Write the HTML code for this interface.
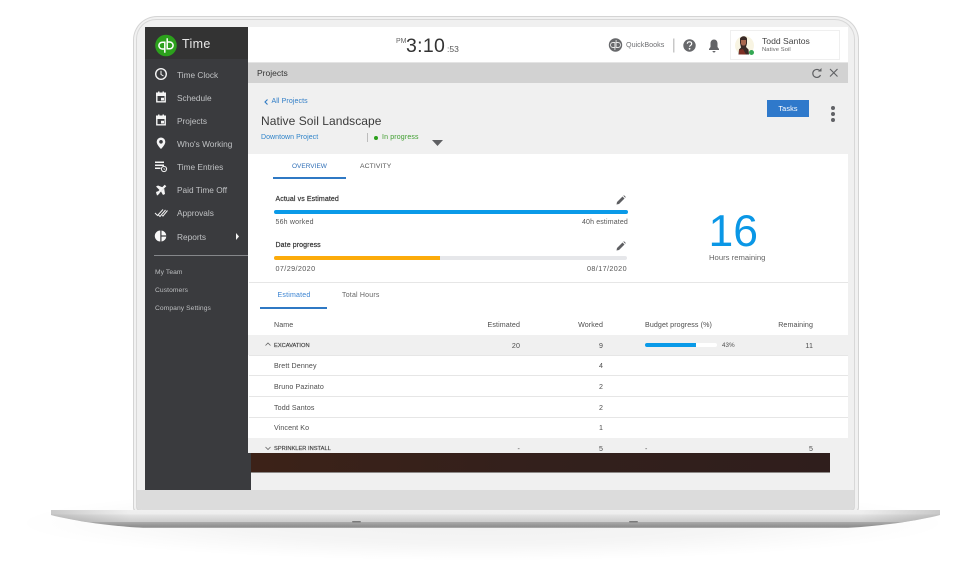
<!DOCTYPE html>
<html><head><meta charset="utf-8"><style>
html,body{margin:0;padding:0;background:#fff}
#p{position:relative;width:965px;height:561px;overflow:hidden;background:#fff;font-family:"Liberation Sans",sans-serif}
#p div{position:absolute;white-space:nowrap}
.nav{left:177px;font-size:8.300px;line-height:12px;color:#c0c2c4}
.sub{left:155px;font-size:6.700px;line-height:10px;color:#bcbec0;letter-spacing:.08px}
.c{font-size:7.100px;line-height:10px;color:#4d4d4d;letter-spacing:.1px}
.g{font-size:5.700px;color:#3d3d3d;letter-spacing:.02px;-webkit-text-stroke:.15px #3d3d3d}
.r{text-align:right}
.line{left:249px;width:599px;height:1px;background:#e6e6e6}
svg{position:absolute;overflow:visible}
</style></head><body><div id="p">

<!-- shadow -->
<div style="left:15px;top:485px;width:935px;height:76px;background:radial-gradient(ellipse 50% 50% at center,rgba(0,0,0,.055) 0,rgba(0,0,0,.04) 55%,rgba(0,0,0,.01) 85%,rgba(0,0,0,0) 100%)"></div>

<!-- lid -->
<div style="left:133px;top:16px;width:726px;height:496px;border-radius:24px 24px 4px 4px;background:#d4d4d4"></div>
<div style="left:134px;top:17px;width:724px;height:494px;border-radius:23px 23px 4px 4px;background:#f1f1f1"></div>
<div style="left:136px;top:19px;width:719px;height:492px;border-radius:20px 20px 4px 4px;background:#d8d8d8"></div>
<div style="left:137px;top:20px;width:717px;height:490px;border-radius:19px 19px 5px 5px;background:#f0f0f0"></div>
<div style="left:137px;top:490px;width:717px;height:20px;border-radius:0 0 5px 5px;background:#dcdcdc"></div>

<!-- base -->
<svg width="965" height="561" style="left:0;top:0">
<defs><linearGradient id="b" x1="0" y1="0" x2="0" y2="1"><stop offset="0" stop-color="#f2f2f2"/><stop offset=".2" stop-color="#f0f0f0"/><stop offset=".3" stop-color="#d6d6d6"/><stop offset=".85" stop-color="#969696"/><stop offset=".95" stop-color="#8e8e8e"/><stop offset="1" stop-color="#c4c4c4"/></linearGradient>
<linearGradient id="e" x1="0" y1="0" x2="1" y2="0"><stop offset="0" stop-color="#a8a8a8"/><stop offset=".09" stop-color="#ededed" stop-opacity=".9"/><stop offset=".91" stop-color="#ededed" stop-opacity=".9"/><stop offset="1" stop-color="#a8a8a8"/></linearGradient></defs>
<path d="M51 510H940V515C915 521 890 525 848 528H143C100 525 76 521 51 515Z" fill="url(#b)"/>
<path d="M51 510H940V515C930 518 915 520 905 522H86C76 520 61 518 51 515Z" fill="url(#e)" opacity=".55"/>
<rect x="352" y="521" width="9" height="1.500" rx="1" fill="#7a7a7a"/><rect x="629" y="521" width="9" height="1.500" rx="1" fill="#7a7a7a"/>
</svg>

<!-- screen -->
<div style="left:145px;top:27px;width:103px;height:463px;background:#3a3b3e"></div>
<div style="left:145px;top:27px;width:103px;height:32px;background:#333;border-radius:3px 0 0 0"></div>
<div style="left:248px;top:27px;width:600px;height:36px;background:#fff"></div>
<div style="left:248px;top:63px;width:600px;height:20px;background:#d2d2d2;box-shadow:0 -1px 0 #e4e4e4"></div>
<div style="left:248px;top:83px;width:600px;height:71px;background:#f0f0f0"></div>
<div style="left:248px;top:154px;width:600px;height:299px;background:#fff"></div>
<div style="left:248px;top:335px;width:600px;height:20px;background:#f0f0f0"></div>
<div style="left:248px;top:438px;width:600px;height:15px;background:#f0f0f0"></div>
<div style="left:251px;top:453px;width:579px;height:18.500px;background:linear-gradient(90deg,#3c2218,#33201c 50%,#2f1e1c);box-shadow:0 1px 0 #8c8886"></div>
<div style="left:248px;top:453px;width:3px;height:37px;background:#3a3b3e"></div>

<!-- logo -->
<svg width="24" height="24" style="left:154px;top:34px" viewBox="0 0 24 24" fill="none"><circle cx="12" cy="11.500" r="10.800" fill="#2ca01c"/><path d="M10.800 15H8.300A3.400 3.400 0 0 1 8.300 8.200H10.800V18.800M13.200 8H15.700A3.400 3.400 0 0 1 15.700 14.800H13.200V4.200" stroke="#fff" stroke-width="1.500"/></svg>
<div style="left:182px;top:36px;font-size:12.500px;line-height:16px;color:#e8e8e8;letter-spacing:.35px">Time</div>

<!-- nav icons -->
<svg width="100" height="190" style="left:150px;top:64px" viewBox="0 0 100 190" fill="none">
<circle cx="11" cy="10" r="5.300" stroke="#f4f4f4" stroke-width="1.400"/><path d="M11 6.800V10.500L13.500 12" stroke="#f4f4f4" stroke-width="1"/>
<path d="M6.800 30H15.200V37.800H6.800Z" stroke="#f4f4f4" stroke-width="1.400"/><path d="M6 28.500H16V32H6ZM8 27.500H9.500V29H8ZM12.500 27.500H14V29H12.500ZM11 33.800H14V36.500H11Z" fill="#f4f4f4"/>
<path d="M6.800 53H15.200V60.800H6.800Z" stroke="#f4f4f4" stroke-width="1.400"/><path d="M6 51.500H16V55H6ZM8 50.500H9.500V52H8ZM12.500 50.500H14V52H12.500ZM11 56.800H14V59.500H11Z" fill="#f4f4f4"/>
<path fill-rule="evenodd" d="M11 73.500A4.300 4.300 0 0 1 15.300 77.800C15.300 80.500 12.500 83.500 11 85C9.500 83.500 6.700 80.500 6.700 77.800A4.300 4.300 0 0 1 11 73.500ZM11 76A1.800 1.800 0 1 0 11 79.600A1.800 1.800 0 1 0 11 76Z" fill="#f4f4f4"/>
<path d="M5 97.500H14V99H5ZM5 100.500H14V102H5ZM5 103.500H10.500V105H5Z" fill="#f4f4f4"/><circle cx="14" cy="105" r="2.600" stroke="#f4f4f4"/><path d="M14 103.800V105.200H15.300" stroke="#f4f4f4" stroke-width=".6"/>
<path d="M7 130L15.500 121.500" stroke="#f4f4f4" stroke-width="2.200"/><path d="M6 122.500L8 121.500L13 123.500L10 126.500ZM14.200 124.500L15 130L13 131L11 127.500ZM6 128L7.800 127.300L9.800 129L8 131L7 131.500Z" fill="#f4f4f4"/>
<path d="M5 149L7.500 151.500L13 145.500M8.500 151L10 152.500L15.500 146M12 151.500L13 152L17.500 146.500" stroke="#f0f0f0" stroke-width="1"/>
<path fill-rule="evenodd" d="M10.300 166.500V177.500A5.500 5.500 0 0 1 10.300 166.500ZM11.500 166.500A5.500 5.500 0 0 1 16.300 171.400H11.500ZM11.500 172.600H16.300A5.500 5.500 0 0 1 11.500 177.500Z" fill="#f8f8f8"/>
<path d="M86 169L89 172.500L86 176Z" fill="#f4f4f4"/>
</svg>
<div class="nav" style="top:68.500px">Time Clock</div>
<div class="nav" style="top:91.500px">Schedule</div>
<div class="nav" style="top:114.500px">Projects</div>
<div class="nav" style="top:137.500px">Who's Working</div>
<div class="nav" style="top:160.500px">Time Entries</div>
<div class="nav" style="top:183.500px">Paid Time Off</div>
<div class="nav" style="top:206.500px">Approvals</div>
<div class="nav" style="top:230.500px">Reports</div>
<div style="left:154px;top:255px;width:94px;height:1px;background:#85878a"></div>
<div class="sub" style="top:268px">My Team</div>
<div class="sub" style="top:286px">Customers</div>
<div class="sub" style="top:304px">Company Settings</div>

<!-- clock -->
<div style="left:396px;top:38px;font-size:7px;line-height:8px;color:#666">PM</div>
<div style="left:406px;top:34px;font-size:19.500px;line-height:24px;color:#333;letter-spacing:.3px">3:10</div>
<div style="left:447px;top:44px;font-size:8.500px;line-height:10px;color:#555">:53</div>

<!-- top right -->
<svg width="240" height="30" style="left:605px;top:30px" viewBox="0 0 240 30" fill="none">
<circle cx="10.500" cy="15" r="6.700" fill="#68696c"/><path d="M9.900 17.500H8A2.500 2.500 0 0 1 8 12.500H9.900V20M11.100 12.500H13A2.500 2.500 0 0 1 13 17.500H11.100V10" stroke="#e8e8e8" stroke-width=".9"/>
<rect x="68" y="8.500" width="1.500" height="14" fill="#c8c8c8"/>
<circle cx="84.500" cy="15.500" r="6.200" fill="#67686b"/><path d="M82.300 13.800C82.300 12.500 83.300 11.800 84.500 11.800C85.800 11.800 86.700 12.500 86.700 13.700C86.700 15.300 84.600 15.300 84.600 16.800" stroke="#fff" stroke-width="1.200"/><circle cx="84.600" cy="18.800" r=".9" fill="#fff"/>
<path d="M109 9.500C111 9.500 112.500 11 112.500 13.500V17L114 19V20H104V19L105.500 17V13.500C105.500 11 107 9.500 109 9.500ZM107.500 21H110.500C110.500 22 109.800 22.500 109 22.500C108.200 22.500 107.500 22 107.500 21Z" fill="#636467"/>
</svg>
<div style="left:626px;top:40px;font-size:7.200px;line-height:10px;color:#6f7073">QuickBooks</div>

<div style="left:730px;top:30px;width:108px;height:28px;background:#fff;border:1px solid #efefef"></div>
<div style="left:734.500px;top:35.500px;width:19px;height:19px;border-radius:50%;background:#f8f4e2;overflow:hidden"></div>
<svg width="19" height="20" style="left:735px;top:35px" viewBox="0 0 19 20"><path d="M5 3.500C6.500 .5 11 .5 12 3.500L12 8.500L11 12L13.500 14.500L14 19.500H3.500L4 14.500L6 12.500L5 8Z" fill="#3a2a26"/><path d="M6 5H11V9L9.500 10.500H7.500L6 9Z" fill="#a8674e"/><path d="M4 15L8 14L11 19.500H4Z" fill="#7c2f24"/></svg>
<div style="left:748.500px;top:49.500px;width:5px;height:5px;border-radius:50%;background:#34a853"></div>
<div style="left:762px;top:36px;font-size:8.600px;line-height:11px;color:#444">Todd Santos</div>
<div style="left:762px;top:45.500px;font-size:5.800px;line-height:9px;color:#666;letter-spacing:.1px">Native Soil</div>

<!-- projects bar -->
<div style="left:257px;top:68px;font-size:8.500px;line-height:11px;color:#333">Projects</div>
<svg width="34" height="14" style="left:810px;top:66px" viewBox="0 0 34 14" fill="none"><path d="M10 5A4 4 0 1 0 10.500 9" stroke="#5f6063" stroke-width="1.200"/><path d="M8 5.500H11.500V2Z" fill="#5f6063"/><path d="M20 3L27.500 10.500M27.500 3L20 10.500" stroke="#5f6063" stroke-width="1.100"/></svg>

<!-- header -->
<svg width="6" height="8" style="left:264px;top:98px" viewBox="0 0 6 8" fill="none"><path d="M3.500 1.500L1 4L3.500 6.500" stroke="#2f7ac4" stroke-width="1.100"/></svg>
<div style="left:271.500px;top:97px;font-size:7px;line-height:10px;color:#2e7cc6;letter-spacing:.1px">All Projects</div>
<div style="left:261px;top:112.500px;font-size:12px;line-height:16px;color:#3b3b3b;letter-spacing:.05px">Native Soil Landscape</div>
<div style="left:261px;top:133px;font-size:7px;line-height:10px;color:#2e83c9;letter-spacing:.05px">Downtown Project</div>
<div style="left:367px;top:133px;width:1px;height:9px;background:#bcbcbc"></div>
<div style="left:374px;top:135.500px;width:4px;height:4px;border-radius:50%;background:#2ca01c"></div>
<div style="left:382px;top:133px;font-size:7px;line-height:10px;color:#3f9e2f;letter-spacing:.15px">In progress</div>
<svg width="12" height="7" style="left:431.500px;top:140px"><path d="M0 0H11L5.500 6Z" fill="#5f6063"/></svg>
<div style="left:767px;top:100px;width:42px;height:17px;background:#2f79cb;color:#fff;font-size:7.300px;line-height:17px;text-align:center;letter-spacing:.1px">Tasks</div>
<div style="left:831px;top:106px;width:4px;height:4px;border-radius:50%;background:#616266"></div>
<div style="left:831px;top:112px;width:4px;height:4px;border-radius:50%;background:#616266"></div>
<div style="left:831px;top:117.500px;width:4px;height:4px;border-radius:50%;background:#616266"></div>

<!-- tabs -->
<div style="left:292px;top:162px;font-size:6.500px;line-height:10px;color:#2f6fb7">OVERVIEW</div>
<div style="left:360px;top:162px;font-size:6.800px;line-height:10px;color:#555;letter-spacing:.1px">ACTIVITY</div>
<div style="left:273px;top:177px;width:73px;height:2px;background:#2f79c4"></div>

<!-- progress -->
<div style="left:275.500px;top:194.500px;font-size:7px;line-height:10px;color:#333;letter-spacing:.1px;-webkit-text-stroke:.2px #333">Actual vs Estimated</div>
<div style="left:274px;top:210px;width:354px;height:4px;border-radius:2px;background:#0a9ae8"></div>
<div style="left:275.500px;top:218px;font-size:7px;line-height:10px;color:#555;letter-spacing:.2px">56h worked</div>
<div style="left:582px;top:218px;font-size:7px;line-height:10px;color:#555;letter-spacing:.15px">40h estimated</div>
<div style="left:275.500px;top:240.500px;font-size:7px;line-height:10px;color:#333;letter-spacing:.1px;-webkit-text-stroke:.2px #333">Date progress</div>
<div style="left:274px;top:256px;width:353px;height:4px;border-radius:2px;background:#e6e7ea"></div>
<div style="left:274px;top:256px;width:166px;height:4px;border-radius:2px 0 0 2px;background:#fcab0a"></div>
<div style="left:275.500px;top:263.500px;font-size:7.200px;line-height:10px;color:#555;letter-spacing:.4px">07/29/2020</div>
<div style="left:587px;top:263.500px;font-size:7.200px;line-height:10px;color:#555;letter-spacing:.4px">08/17/2020</div>
<svg width="10" height="10" style="left:616px;top:195px" viewBox="0 0 10 10"><path d="M0.500 9.500L1 7L6.500 1.500L8.500 3.500L3 9ZM7.300 .8L8 .2L9.800 2L9.200 2.700Z" fill="#5e5f62"/></svg>
<svg width="10" height="10" style="left:616px;top:241px" viewBox="0 0 10 10"><path d="M0.500 9.500L1 7L6.500 1.500L8.500 3.500L3 9ZM7.300 .8L8 .2L9.800 2L9.200 2.700Z" fill="#5e5f62"/></svg>
<div style="left:708.500px;top:206.500px;font-size:44.500px;line-height:50px;color:#0a97e6">16</div>
<div style="left:709px;top:252.500px;font-size:7.700px;line-height:10px;color:#666">Hours remaining</div>

<div class="line" style="top:282px"></div>

<!-- table tabs -->
<div style="left:277.500px;top:291px;font-size:7px;line-height:10px;color:#3a83d2;letter-spacing:.2px">Estimated</div>
<div style="left:342px;top:291px;font-size:7px;line-height:10px;color:#666;letter-spacing:.2px">Total Hours</div>
<div style="left:260px;top:307px;width:67px;height:2px;background:#2f79c4"></div>

<!-- table head -->
<div class="c" style="left:274px;top:320px">Name</div>
<div class="c r" style="left:470px;width:50px;top:320px">Estimated</div>
<div class="c r" style="left:553px;width:50px;top:320px">Worked</div>
<div class="c" style="left:645px;top:320px">Budget progress (%)</div>
<div class="c r" style="left:763px;width:50px;top:320px">Remaining</div>

<!-- rows -->
<svg width="6" height="5" style="left:264.500px;top:342px" fill="none"><path d="M.5 3.500L3 1L5.500 3.500" stroke="#666" stroke-width=".8"/></svg>
<div class="c g" style="left:274px;top:341px">EXCAVATION</div>
<div class="c r" style="left:470px;width:50px;top:340.500px">20</div>
<div class="c r" style="left:553px;width:50px;top:340.500px">9</div>
<div style="left:645px;top:343px;width:72px;height:4px;border-radius:2px;background:#fff"></div>
<div style="left:645px;top:343px;width:51px;height:4px;border-radius:2px 0 0 2px;background:#0a9ae8"></div>
<div class="c" style="left:722px;top:340.500px;font-size:6.200px">43%</div>
<div class="c r" style="left:763px;width:50px;top:340.500px">11</div>
<div class="line" style="top:355px"></div>

<div class="c" style="left:274px;top:361px">Brett Denney</div>
<div class="c r" style="left:553px;width:50px;top:361px">4</div>
<div class="line" style="top:375px"></div>
<div class="c" style="left:274px;top:381.500px">Bruno Pazinato</div>
<div class="c r" style="left:553px;width:50px;top:381.500px">2</div>
<div class="line" style="top:396px"></div>
<div class="c" style="left:274px;top:402.500px">Todd Santos</div>
<div class="c r" style="left:553px;width:50px;top:402.500px">2</div>
<div class="line" style="top:417px"></div>
<div class="c" style="left:274px;top:423px">Vincent Ko</div>
<div class="c r" style="left:553px;width:50px;top:423px">1</div>

<svg width="6" height="5" style="left:264.500px;top:446px" fill="none"><path d="M.5 1L3 3.500L5.500 1" stroke="#666" stroke-width=".8"/></svg>
<div class="c g" style="left:274px;top:444px">SPRINKLER INSTALL</div>
<div class="c r" style="left:470px;width:50px;top:444px">-</div>
<div class="c r" style="left:553px;width:50px;top:444px">5</div>
<div class="c" style="left:645px;top:444px">-</div>
<div class="c r" style="left:763px;width:50px;top:444px">5</div>

</div></body></html>
